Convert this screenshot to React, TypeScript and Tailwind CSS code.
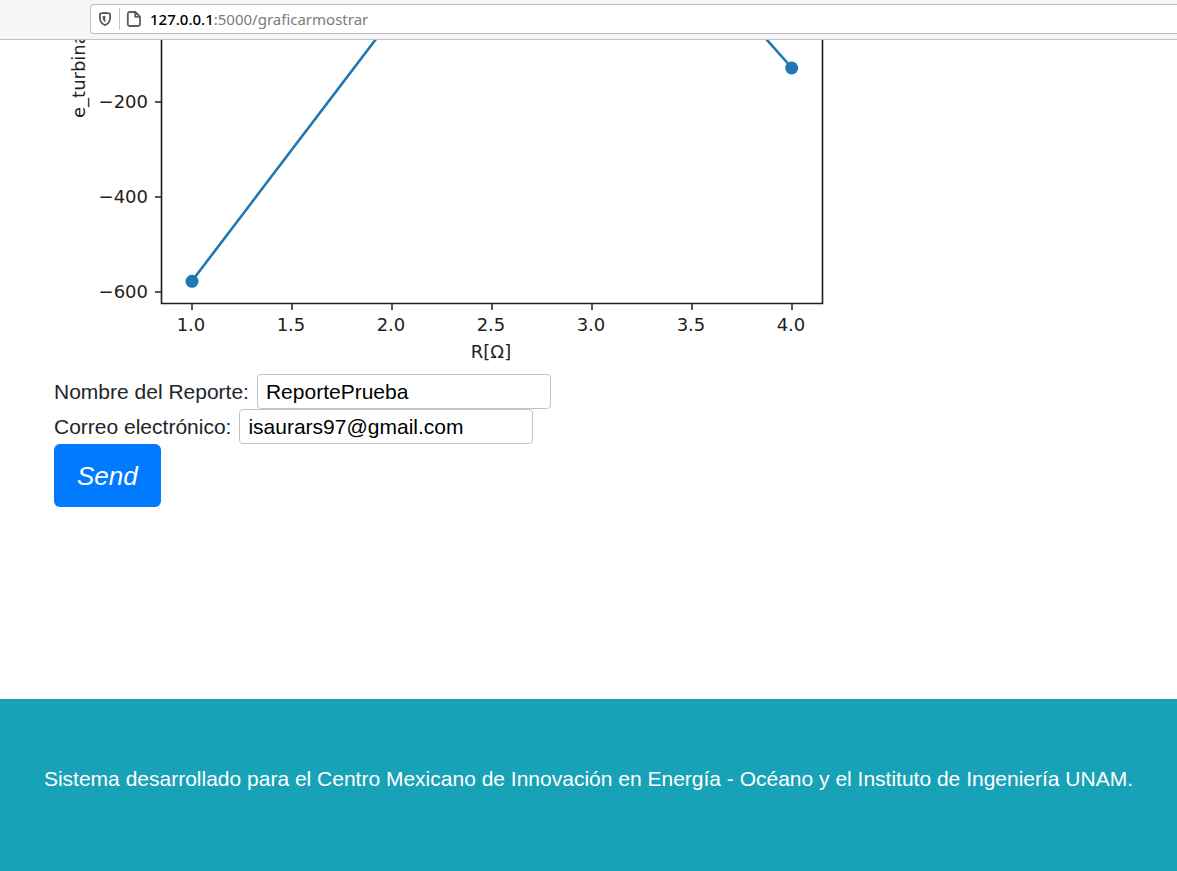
import React from "react";

const xTicks = [
  { x: 192, label: "1.0" },
  { x: 292, label: "1.5" },
  { x: 392, label: "2.0" },
  { x: 492, label: "2.5" },
  { x: 592, label: "3.0" },
  { x: 692, label: "3.5" },
  { x: 792, label: "4.0" },
];

const yTicks = [
  { y: 102, label: "−200" },
  { y: 197, label: "−400" },
  { y: 292, label: "−600" },
];

function ShieldIcon() {
  return (
    <svg className="h-4 w-4" viewBox="0 0 16 16" fill="none" aria-hidden="true">
      <path
        d="M8 1.8 Q10.8 1.9 13.1 2.9 V6.6 C13.1 10.4 11.3 12.9 8 14.1 C4.7 12.9 2.9 10.4 2.9 6.6 V2.9 Q5.2 1.9 8 1.8 Z"
        stroke="#5c5c5f"
        strokeWidth="1.8"
        strokeLinejoin="round"
      />
      <path d="M8.4 4.7 V11.4 C6.5 10.4 5.6 8.8 5.6 6.6 V5.2 Z" fill="#5c5c5f" />
    </svg>
  );
}

function PageIcon() {
  return (
    <svg className="h-4 w-4" viewBox="0 0 16 16" fill="none" aria-hidden="true">
      <path
        d="M3.6 1 H9.4 L14 5.6 V13.2 A1.8 1.8 0 0 1 12.2 15 H3.6 A1.8 1.8 0 0 1 1.8 13.2 V2.8 A1.8 1.8 0 0 1 3.6 1 Z M9.2 1.4 V5.8 H13.6"
        stroke="#5c5c5f"
        strokeWidth="1.8"
        strokeLinejoin="round"
      />
    </svg>
  );
}

function AddressBar() {
  return (
    <header className="flex h-10 border-b border-[#c0c0c1] bg-[#f6f6f7] pt-1 pb-[5px] pl-[90px]">
      <div className="flex flex-1 items-center rounded-l border border-r-0 border-[#bdbdbe] bg-white pl-[6px] font-['Noto_Sans',sans-serif] text-[15px]">
        <ShieldIcon />
        <span className="mx-[6px] h-[22px] w-px bg-[#c4c4c5]" />
        <PageIcon />
        <p className="ml-2 whitespace-nowrap text-[#7b7b7d]">
          <span className="font-medium text-black">127.0.0.1</span>
          :5000/graficarmostrar
        </p>
      </div>
    </header>
  );
}

function TurbineChart() {
  return (
    <svg
      className="block h-auto w-full max-w-[800px] font-['DejaVu_Sans',sans-serif] text-[18px]"
      viewBox="54 40 800 334"
      role="img"
      aria-label="e_turbina / R[Ω]"
    >
      <path d="M161.5 30 V303.5 H822.5 V30" fill="none" stroke="#1c1c1c" strokeWidth="1.6" />
      {yTicks.map((t) => (
        <g key={t.label}>
          <path d={`M155 ${t.y} H161`} stroke="#222" strokeWidth="1.5" />
          <text x="148" y={t.y + 6} textAnchor="end" fill="#222">
            {t.label}
          </text>
        </g>
      ))}
      {xTicks.map((t) => (
        <g key={t.label}>
          <path d={`M${t.x} 304 V310`} stroke="#222" strokeWidth="1.5" />
          <text x={t.x - 1} y="331" textAnchor="middle" fill="#222">
            {t.label}
          </text>
        </g>
      ))}
      <text x="491" y="358" textAnchor="middle" fill="#222">
        R[Ω]
      </text>
      <text transform="translate(85 118) rotate(-90)" fill="#222">
        e_turbina
      </text>
      <path
        d="M192 281 L392 18 M692 -44 L792 68"
        fill="none"
        stroke="#1f77b4"
        strokeWidth="2.6"
      />
      <circle cx="192" cy="281.3" r="6.5" fill="#1f77b4" />
      <circle cx="791.7" cy="68" r="6.5" fill="#1f77b4" />
    </svg>
  );
}

function ReportForm() {
  return (
    <form className="flex flex-col items-start" onSubmit={(e) => e.preventDefault()}>
      <div className="flex items-center gap-2">
        <label htmlFor="nombre">Nombre del Reporte:</label>
        <input
          id="nombre"
          type="text"
          defaultValue="ReportePrueba"
          className="h-[35px] w-[294px] rounded border border-[#c2c2c3] bg-white px-2 text-black"
        />
      </div>
      <div className="flex items-center gap-2">
        <label htmlFor="correo">Correo electrónico:</label>
        <input
          id="correo"
          type="email"
          defaultValue="isaurars97@gmail.com"
          className="h-[35px] w-[294px] rounded border border-[#c2c2c3] bg-white px-2 text-black"
        />
      </div>
      <button
        type="submit"
        className="h-[63px] rounded-md bg-[#007bff] px-[23px] text-[26px] text-white italic"
      >
        Send
      </button>
    </form>
  );
}

export default function App() {
  return (
    <div className="flex min-h-screen flex-col bg-white font-['Liberation_Sans',Arial,sans-serif] text-[21px] leading-8 text-[#212529]">
      <AddressBar />
      <main className="flex-1 px-[54px] pb-48">
        <TurbineChart />
        <ReportForm />
      </main>
      <footer className="bg-[#17a2b8] px-4 pt-16 pb-[76px] text-center text-white">
        <p>
          Sistema desarrollado para el Centro Mexicano de Innovación en Energía - Océano y el
          Instituto de Ingeniería UNAM.
        </p>
      </footer>
    </div>
  );
}
